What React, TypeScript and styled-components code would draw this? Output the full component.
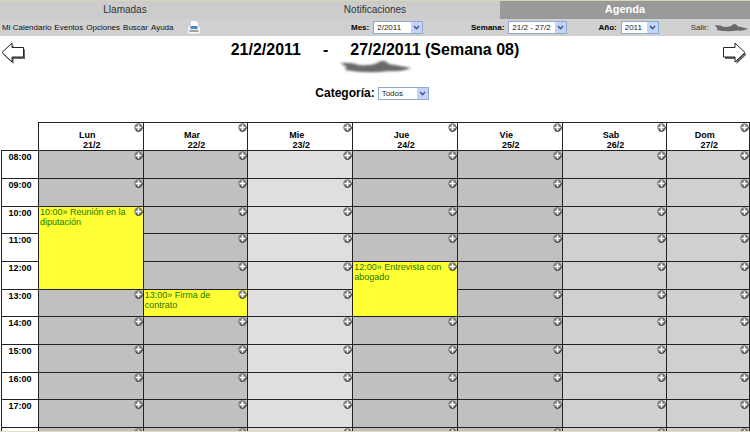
import React from "react";
import styled, { createGlobalStyle, css } from "styled-components";

const GlobalStyle = createGlobalStyle`
  *, *::before, *::after { box-sizing: border-box; }
  body {
    margin: 0;
    background: #fff;
    color: #000;
    font-family: "Liberation Sans", Arial, sans-serif;
  }
`;

const Page = styled.div`
  height: 100vh;
  overflow: hidden;
  border-top: 1px solid #d8d3bb;
  border-bottom: 1px solid #e6d8c6;
`;

const Tabs = styled.nav`
  display: grid;
  grid-template-columns: repeat(3, 1fr);
`;

const Tab = styled.a<{ $active?: boolean }>`
  height: 18px;
  line-height: 17px;
  text-align: center;
  text-decoration: none;
  font-size: ${(p) => (p.$active ? "11px" : "10px")};
  font-weight: ${(p) => (p.$active ? 700 : 400)};
  color: ${(p) => (p.$active ? "#fff" : "#333")};
  background: ${(p) => (p.$active ? "#999" : "#ccc")};
`;

const Toolbar = styled.div`
  display: grid;
  grid-template-columns: 46% 16% 17% 1fr auto;
  align-items: center;
  height: 17px;
  background: #d0d0d0;
  font-size: 8px;
`;

const Menu = styled.div`
  display: flex;
  align-items: center;
  gap: 3px;
  padding-left: 2px;
`;

const MenuLink = styled.a`
  color: #111;
  text-decoration: none;
  white-space: nowrap;
`;

const PrintButton = styled.button`
  display: flex;
  margin-left: 10px;
  padding: 0;
  border: 0;
  background: none;
`;

const Field = styled.label<{ $large?: boolean }>`
  display: flex;
  align-items: center;
  gap: ${(p) => (p.$large ? "3px" : "4px")};
  padding-left: 6px;
  font-weight: 700;
  font-size: ${(p) => (p.$large ? "12px" : "8px")};
`;

const SelectBox = styled.span`
  display: grid;
  align-items: center;
  height: 13px;
  border: 1px solid #8fabcc;
  background: #fff;

  & > * { grid-area: 1 / 1; }
  & > svg { justify-self: end; pointer-events: none; }
`;

const Select = styled.select<{ $width: number }>`
  appearance: none;
  width: ${(p) => p.$width}px;
  height: 11px;
  padding: 0 0 0 3px;
  border: 0;
  border-radius: 0;
  background: transparent;
  color: #222;
  font: 8px/11px "Liberation Sans", Arial, sans-serif;
`;

const Exit = styled.a`
  display: flex;
  align-items: center;
  gap: 3px;
  color: #333;
  text-decoration: none;
  font-size: 8px;
`;

const WeekBar = styled.header`
  display: grid;
  grid-template-columns: 26px 1fr 26px;
  align-items: start;
  padding: 5px 1px 0;
`;

const ArrowButton = styled.button`
  display: flex;
  padding: 1px 0 0;
  border: 0;
  background: none;
`;

const WeekTitle = styled.h1`
  display: flex;
  justify-content: center;
  gap: 22px;
  margin: 0;
  font-size: 16px;
  line-height: 18px;
`;

const Person = styled.div`
  display: flex;
  justify-content: center;
  height: 18px;
`;

const Category = styled.div`
  display: flex;
  justify-content: center;
  padding: 9px 12px 22px 0;
`;

const Calendar = styled.table`
  width: calc(100% - 1px);
  margin-left: 1px;
  table-layout: fixed;
  border-collapse: collapse;
`;

const HourCol = styled.col` width: 37px; `;
const DayCol = styled.col` width: 14%; `;

const line = css` border: 1px solid #222; `;

const HeadRow = styled.tr` height: 28px; `;

const Row = styled.tr`
  height: 28px;
  &:nth-child(3n) { height: 27px; }
`;

const Corner = styled.td` padding: 0; `;

const DayHead = styled.th`
  ${line}
  padding: 0;
  vertical-align: top;
  font-size: 9px;
  line-height: 10px;
`;

const DayName = styled.div` padding: 7px 0 0 2px; `;
const DayDate = styled.div` padding-left: 2px; `;

const Hour = styled.th`
  ${line}
  padding: 1px 0 0;
  vertical-align: top;
  font-size: 9px;
  line-height: 10px;
`;

type Tone = "weekday" | "today" | "weekend" | "busy";
const tones: Record<Tone, string> = {
  weekday: "#c0c0c0",
  today: "#dfdfdf",
  weekend: "#d0d0d0",
  busy: "#ffff33",
};

const Slot = styled.td<{ $tone: Tone }>`
  ${line}
  padding: 0 0 0 1px;
  vertical-align: top;
  background: ${(p) => tones[p.$tone]};
`;

const AddButton = styled.button`
  float: right;
  display: flex;
  padding: 0;
  border: 0;
  background: none;
`;

const EventLink = styled.a`
  display: block;
  color: #1c7a00;
  text-decoration: none;
  font-size: 9px;
  line-height: 10px;
`;

function Add({ label }: { label: string }) {
  return (
    <AddButton type="button" aria-label={label}>
      <svg width="9" height="9" viewBox="0 0 9 9">
        <circle cx="4.5" cy="4.5" r="4.2" fill="#777" />
        <path d="M8.200 4A3.800 3.800 0 0 1 2 7.400" stroke="#333" fill="none" />
        <path d="M4.500 1.500v6M1.500 4.500h6" stroke="#fff" strokeWidth="1.600" />
      </svg>
    </AddButton>
  );
}

function Picker({ label, value, width, large }: { label: string; value: string; width: number; large?: boolean }) {
  return (
    <Field $large={large}>
      {label}
      <SelectBox>
        <Select $width={width} defaultValue={value}>
          <option>{value}</option>
        </Select>
        <svg width="11" height="11" viewBox="0 0 11 11">
          <rect width="11" height="11" rx="1" fill="#c3d3fb" />
          <path d="M3 4l2.5 2.7L8 4" fill="none" stroke="#3f5580" strokeWidth="1.5" />
        </svg>
      </SelectBox>
    </Field>
  );
}

function Arrow({ right }: { right?: boolean }) {
  const shape = right ? "M.5 5.500h11.500v-4.500l10 9.500-10 9.500v-5h-11.500z" : "M22.500 5.500h-11.500v-4.500l-10 9.500 10 9.500v-5h11.500z";
  return (
    <svg width="25" height="24" viewBox="0 0 25 24">
      <path d={shape} transform="translate(1.500 2)" fill="#666" />
      <path d={shape} fill="#fff" stroke="#222" />
    </svg>
  );
}

function Smudge({ width, height }: { width: number; height: number }) {
  return (
    <svg width={width} height={height} viewBox="0 0 80 16" preserveAspectRatio="none">
      <defs>
        <filter id="soft" x="-10%" y="-30%" width="120%" height="160%">
          <feGaussianBlur stdDeviation="1.6 1" />
        </filter>
      </defs>
      <path
        d="M5 4Q16 3 24 6Q36 7 42 4Q49 -1 54 5Q66 7 76 9Q66 13 54 12Q32 15 10 11Q14 8 5 4Z"
        fill="#6a6a6a"
        filter="url(#soft)"
      />
    </svg>
  );
}

const days = [
  { name: "Lun", date: "21/2", tone: "weekday" },
  { name: "Mar", date: "22/2", tone: "weekday" },
  { name: "Mie", date: "23/2", tone: "today" },
  { name: "Jue", date: "24/2", tone: "weekday" },
  { name: "Vie", date: "25/2", tone: "weekday" },
  { name: "Sab", date: "26/2", tone: "weekend" },
  { name: "Dom", date: "27/2", tone: "weekend" },
] as const;

const events = [
  { day: 0, hour: 10, span: 3, text: "Reunión en la diputación" },
  { day: 1, hour: 13, span: 1, text: "Firma de contrato" },
  { day: 3, hour: 12, span: 2, text: "Entrevista con abogado" },
];

const hours = Array.from({ length: 11 }, (_, i) => i + 8);
const clock = (h: number) => `${String(h).padStart(2, "0")}:00`;

function DaySlot({ day, hour }: { day: number; hour: number }) {
  const event = events.find((e) => e.day === day && hour >= e.hour && hour < e.hour + e.span);
  if (event && event.hour !== hour) return null;
  return (
    <Slot $tone={event ? "busy" : days[day].tone} rowSpan={event?.span}>
      <Add label={`Añadir ${days[day].name} ${clock(hour)}`} />
      {event && <EventLink href="#">{`${clock(hour)}» ${event.text}`}</EventLink>}
    </Slot>
  );
}

export default function App() {
  return (
    <Page>
      <GlobalStyle />
      <Tabs>
        <Tab href="#">Llamadas</Tab>
        <Tab href="#">Notificaciones</Tab>
        <Tab href="#" $active>Agenda</Tab>
      </Tabs>
      <Toolbar>
        <Menu>
          {["Mi Calendario", "Eventos", "Opciones", "Buscar", "Ayuda"].map((m) => (
            <MenuLink key={m} href="#">{m}</MenuLink>
          ))}
          <PrintButton type="button" aria-label="Imprimir">
            <svg width="14" height="14" viewBox="0 0 14 14">
              <path d="M4 0h5l2 2v4H4z" fill="#fff" />
              <path d="M1 6l2-1h8l2 1v6H1z" fill="#eef0f6" />
              <path d="M3.500 5h7v3h-7z" fill="#4f86cf" />
              <path d="M2.500 10h9" stroke="#555" />
              <path d="M2 12h10" stroke="#fff" />
            </svg>
          </PrintButton>
        </Menu>
        <Picker label="Mes:" value="2/2011" width={48} />
        <Picker label="Semana:" value="21/2 - 27/2" width={57} />
        <Picker label="Año:" value="2011" width={36} />
        <Exit href="#">
          Salir:
          <Smudge width={38} height={10} />
        </Exit>
      </Toolbar>
      <WeekBar>
        <ArrowButton type="button" aria-label="Semana anterior"><Arrow /></ArrowButton>
        <div>
          <WeekTitle>
            <span>21/2/2011</span>
            <span>-</span>
            <span>27/2/2011 (Semana 08)</span>
          </WeekTitle>
          <Person><Smudge width={80} height={16} /></Person>
          <Category>
            <Picker label="Categoría:" value="Todos" width={49} large />
          </Category>
        </div>
        <ArrowButton type="button" aria-label="Semana siguiente"><Arrow right /></ArrowButton>
      </WeekBar>
      <Calendar>
        <colgroup>
          <HourCol />
          {days.slice(0, 6).map((d) => <DayCol key={d.name} />)}
          <col />
        </colgroup>
        <thead>
          <HeadRow>
            <Corner />
            {days.map((d) => (
              <DayHead key={d.name} scope="col">
                <Add label={`Añadir ${d.name}`} />
                <DayName>{d.name}</DayName>
                <DayDate>{d.date}</DayDate>
              </DayHead>
            ))}
          </HeadRow>
        </thead>
        <tbody>
          {hours.map((h) => (
            <Row key={h}>
              <Hour scope="row">{clock(h)}</Hour>
              {days.map((d, i) => <DaySlot key={d.name} day={i} hour={h} />)}
            </Row>
          ))}
        </tbody>
      </Calendar>
    </Page>
  );
}
